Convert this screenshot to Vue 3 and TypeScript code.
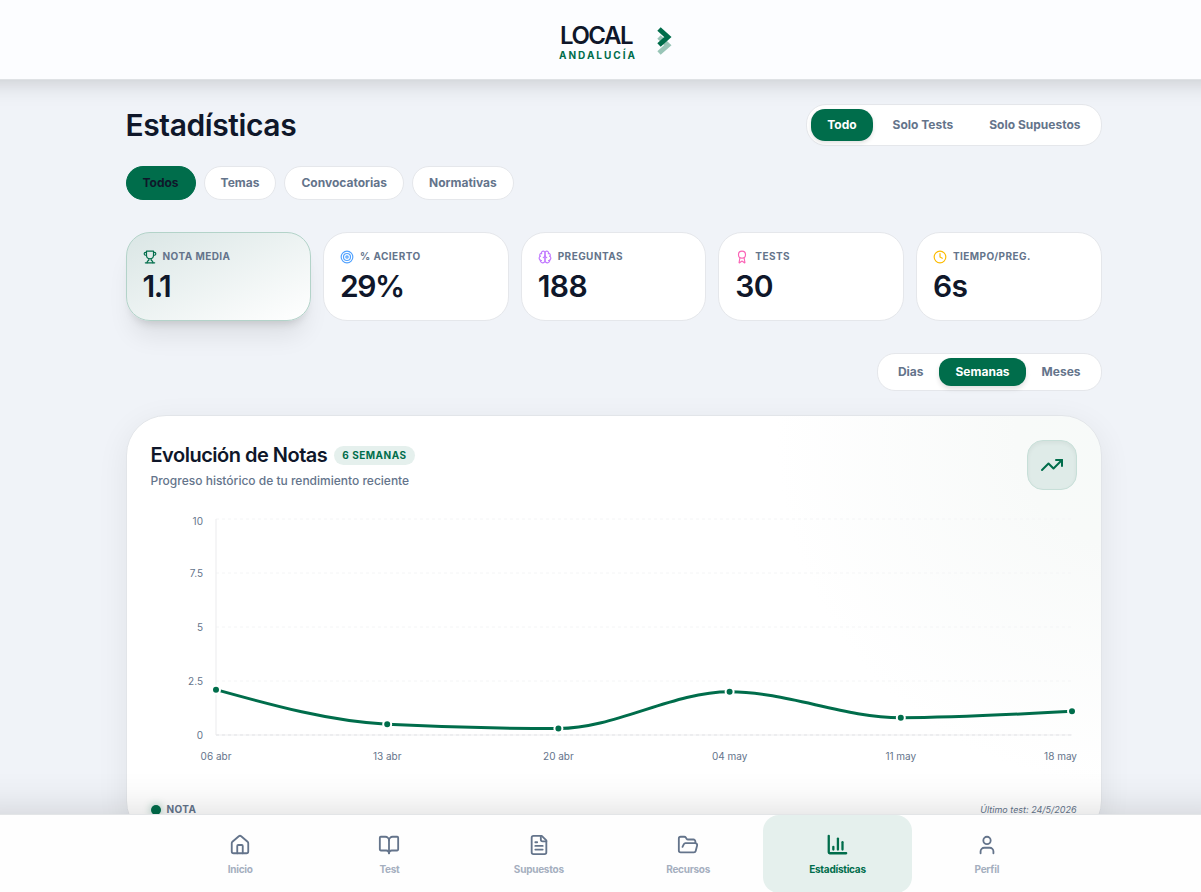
<script setup lang="ts">
interface Stat {
  label: string
  value: string
  color: string
  fit: string
  icon: string
}

const scopes = ['Todo', 'Solo Tests', 'Solo Supuestos']
const filters = ['Todos', 'Temas', 'Convocatorias', 'Normativas']
const ranges = ['Dias', 'Semanas', 'Meses']

const stats: Stat[] = [
  {
    label: 'Nota media',
    value: '1.1',
    color: '#006d4b',
    fit: 'tight',
    icon: '<path d="M6 9H4.5a2.5 2.5 0 0 1 0-5H6"/><path d="M18 9h1.5a2.5 2.5 0 0 0 0-5H18"/><path d="M4 22h16"/><path d="M10 14.66V17c0 .55-.47.98-.97 1.21C7.85 18.75 7 20.24 7 22"/><path d="M14 14.66V17c0 .55.47.98.97 1.21C16.15 18.75 17 20.24 17 22"/><path d="M18 2H6v7a6 6 0 0 0 12 0V2Z"/>',
  },
  {
    label: '% Acierto',
    value: '29%',
    color: '#51a2ff',
    fit: 'tight',
    icon: '<circle cx="12" cy="12" r="10"/><circle cx="12" cy="12" r="6"/><circle cx="12" cy="12" r="2"/>',
  },
  {
    label: 'Preguntas',
    value: '188',
    color: '#c27aff',
    fit: 'snug',
    icon: '<path d="M12 5a3 3 0 1 0-5.997.125 4 4 0 0 0-2.526 5.77 4 4 0 0 0 .556 6.588A4 4 0 1 0 12 18Z"/><path d="M12 5a3 3 0 1 1 5.997.125 4 4 0 0 1 2.526 5.77 4 4 0 0 1-.556 6.588A4 4 0 1 1 12 18Z"/><path d="M15 13a4.5 4.5 0 0 1-3-4 4.5 4.5 0 0 1-3 4"/><path d="M17.599 6.5a3 3 0 0 0 .399-1.375"/><path d="M6.003 5.125A3 3 0 0 0 6.401 6.5"/><path d="M3.477 10.896a4 4 0 0 1 .585-.396"/><path d="M19.938 10.5a4 4 0 0 1 .585.396"/><path d="M6 18a4 4 0 0 1-1.967-.516"/><path d="M19.967 17.484A4 4 0 0 1 18 18"/>',
  },
  {
    label: 'Tests',
    value: '30',
    color: '#fb64b6',
    fit: 'snug',
    icon: '<path d="m15.477 12.89 1.515 8.526a.5.5 0 0 1-.81.47l-3.58-2.687a1 1 0 0 0-1.197 0l-3.586 2.686a.5.5 0 0 1-.81-.469l1.514-8.526"/><circle cx="12" cy="8" r="6"/>',
  },
  {
    label: 'Tiempo/preg.',
    value: '6s',
    color: '#fcbb00',
    fit: 'snug',
    icon: '<circle cx="12" cy="12" r="10"/><path d="M12 6v6l4 2"/>',
  },
]

const navItems = [
  {
    label: 'Inicio',
    icon: '<path d="M15 21v-8a1 1 0 0 0-1-1h-4a1 1 0 0 0-1 1v8"/><path d="M3 10a2 2 0 0 1 .709-1.528l7-5.999a2 2 0 0 1 2.582 0l7 5.999A2 2 0 0 1 21 10v9a2 2 0 0 1-2 2H5a2 2 0 0 1-2-2z"/>',
  },
  {
    label: 'Test',
    icon: '<path d="M12 7v14"/><path d="M3 18a1 1 0 0 1-1-1V4a1 1 0 0 1 1-1h5a4 4 0 0 1 4 4 4 4 0 0 1 4-4h5a1 1 0 0 1 1 1v13a1 1 0 0 1-1 1h-6a3 3 0 0 0-3 3 3 3 0 0 0-3-3z"/>',
  },
  {
    label: 'Supuestos',
    icon: '<path d="M15 2H6a2 2 0 0 0-2 2v16a2 2 0 0 0 2 2h12a2 2 0 0 0 2-2V7Z"/><path d="M14 2v4a2 2 0 0 0 2 2h4"/><path d="M10 9H8"/><path d="M16 13H8"/><path d="M16 17H8"/>',
  },
  {
    label: 'Recursos',
    icon: '<path d="m6 14 1.5-2.9A2 2 0 0 1 9.24 10H20a2 2 0 0 1 1.94 2.5l-1.54 6a2 2 0 0 1-1.95 1.5H4a2 2 0 0 1-2-2V5a2 2 0 0 1 2-2h3.9a2 2 0 0 1 1.69.9l.81 1.2a2 2 0 0 0 1.67.9H18a2 2 0 0 1 2 2v2"/>',
  },
  {
    label: 'Estadísticas',
    icon: '<path d="M3 2v18a1 1 0 0 0 1 1h18"/><path d="M8 17v-3"/><path d="M13 17V5"/><path d="M18 17V9"/>',
  },
  {
    label: 'Perfil',
    icon: '<path d="M19 21v-2a4 4 0 0 0-4-4H9a4 4 0 0 0-4 4v2"/><circle cx="12" cy="7" r="4"/>',
  },
]

const plot = { left: 65, right: 921, top: 10, bottom: 226 }
const ticks = [10, 7.5, 5, 2.5, 0]
const series = [
  { label: '06 abr', value: 2.1 },
  { label: '13 abr', value: 0.5 },
  { label: '20 abr', value: 0.3 },
  { label: '04 may', value: 2.0 },
  { label: '11 may', value: 0.8 },
  { label: '18 may', value: 1.1 },
]

const yOf = (v: number): number => plot.bottom - (v / 10) * (plot.bottom - plot.top)
const step = (plot.right - plot.left) / (series.length - 1)
const points = series.map((s, i) => ({ ...s, x: plot.left + i * step, y: yOf(s.value) }))

// Monotone cubic interpolation along x
function monotonePath(): string {
  const n = points.length
  const slopes = points.slice(1).map((p, i) => (p.y - points[i].y) / step)
  const t: number[] = new Array(n).fill(0)
  for (let i = 1; i < n - 1; i++) {
    const a = slopes[i - 1]
    const b = slopes[i]
    t[i] = (Math.sign(a) + Math.sign(b)) * Math.min(Math.abs(a), Math.abs(b), 0.25 * Math.abs(a + b))
  }
  t[0] = (3 * slopes[0] - t[1]) / 2
  t[n - 1] = (3 * slopes[n - 2] - t[n - 2]) / 2
  let d = `M${points[0].x},${points[0].y}`
  for (let i = 1; i < n; i++) {
    const p = points[i - 1]
    const q = points[i]
    d += `C${p.x + step / 3},${p.y + (t[i - 1] * step) / 3},${q.x - step / 3},${q.y - (t[i] * step) / 3},${q.x},${q.y}`
  }
  return d
}
const linePath = monotonePath()
</script>

<template>
  <div class="page">
    <header class="topbar">
      <div class="brand">
        <div class="brand-text">
          <span class="brand-name">LOCAL</span>
          <span class="brand-region">ANDALUCÍA</span>
        </div>
        <svg class="brand-mark" width="16" height="28" viewBox="0 0 16 28" fill="none" stroke-width="5">
          <path d="M2 10l8.8 8.2L2 26" stroke="#99c5b7" />
          <path d="M2 2l8.8 8L2 18" stroke="#006d4b" />
        </svg>
      </div>
    </header>

    <main class="content">
      <div class="title-row">
        <h1>Estadísticas</h1>
        <div class="segment scope">
          <button v-for="(s, i) in scopes" :key="s" :class="{ active: i === 0 }">{{ s }}</button>
        </div>
      </div>

      <div class="filters">
        <button v-for="(f, i) in filters" :key="f" :class="{ active: i === 0 }">{{ f }}</button>
      </div>

      <section class="stats">
        <article v-for="(s, i) in stats" :key="s.label" class="stat" :class="{ featured: i === 0 }">
          <div class="stat-head">
            <svg width="14" height="14" viewBox="0 0 24 24" fill="none" :stroke="s.color" stroke-width="2" stroke-linecap="round" stroke-linejoin="round" v-html="s.icon" />
            <span>{{ s.label }}</span>
          </div>
          <div class="stat-value" :class="s.fit">{{ s.value }}</div>
        </article>
      </section>

      <div class="range-row">
        <div class="segment range">
          <button v-for="(r, i) in ranges" :key="r" :class="{ active: i === 1 }">{{ r }}</button>
        </div>
      </div>

      <section class="panel">
        <div class="panel-head">
          <div class="panel-intro">
            <div class="panel-title">
              <h2>Evolución de Notas</h2>
              <span class="badge">6 semanas</span>
            </div>
            <p>Progreso histórico de tu rendimiento reciente</p>
          </div>
          <div class="trend">
            <svg width="24" height="24" viewBox="0 0 24 24" fill="none" stroke="#006d4b" stroke-width="2" stroke-linecap="round" stroke-linejoin="round">
              <path d="M22 7 13.5 15.5 8.5 10.5 2 17" />
              <path d="M16 7h6v6" />
            </svg>
          </div>
        </div>

        <svg class="chart" width="926" height="280" viewBox="0 0 926 280">
          <line v-for="t in ticks" :key="'g' + t" :x1="plot.left" :x2="plot.right" :y1="yOf(t)" :y2="yOf(t)" stroke="#f4f5f6" stroke-dasharray="3 3" />
          <line :x1="plot.left" :x2="plot.left" :y1="plot.top" :y2="plot.bottom" stroke="#ebebed" />
          <line :x1="plot.left" :x2="plot.right" :y1="plot.bottom" :y2="plot.bottom" stroke="#efeff1" />
          <line :x1="plot.left" :x2="plot.right" :y1="plot.bottom" :y2="plot.bottom" stroke="#e6e7e9" stroke-dasharray="3 3" />
          <text v-for="t in ticks" :key="'y' + t" x="52" :y="yOf(t) + (t === 10 ? 6 : 4)" text-anchor="end">{{ t }}</text>
          <text v-for="(p, i) in points" :key="p.label" :x="i === 5 ? 926 : p.x" y="251" :text-anchor="i === 5 ? 'end' : 'middle'">{{ p.label }}</text>
          <path :d="linePath" fill="none" stroke="#006d4b" stroke-width="3" />
          <circle v-for="p in points" :key="'d' + p.label" :cx="p.x" :cy="p.y" r="4" fill="#006d4b" stroke="#fff" stroke-width="2" />
        </svg>

        <div class="panel-foot">
          <span class="legend"><i />Nota</span>
          <em>Último test: 24/5/2026</em>
        </div>
      </section>
    </main>

    <nav class="bottombar">
      <a v-for="(n, i) in navItems" :key="n.label" :class="{ active: i === 4 }">
        <svg width="22" height="22" viewBox="0 0 24 24" fill="none" stroke="currentColor" :stroke-width="i === 4 ? 2.5 : 2" stroke-linecap="round" stroke-linejoin="round" v-html="n.icon" />
        <span>{{ n.label }}</span>
      </a>
    </nav>
  </div>
</template>

<style>
body {
  background: #f0f4f8;
  overflow: hidden;
}
</style>

<style scoped>
.page {
  box-sizing: border-box;
  height: 892px;
  overflow: hidden;
  display: flex;
  flex-direction: column;
  background: #f0f3f8;
  color: #0f172a;
  font-family: Inter, 'Liberation Sans', sans-serif;
}
button {
  border: 0;
  background: none;
  padding: 0;
  font: 700 12px/16px Inter, 'Liberation Sans', sans-serif;
  color: #64748b;
}
.topbar {
  flex: none;
  position: relative;
  z-index: 2;
  box-sizing: border-box;
  height: 80px;
  padding: 0 0 0 31px;
  display: flex;
  align-items: center;
  justify-content: center;
  background: #fcfdff;
  border-bottom: 1px solid #dfe2e5;
  box-shadow: 0 -30px 24px 30px rgba(0, 0, 0, 0.21);
}
.brand {
  display: flex;
  align-items: center;
  gap: 20px;
}
.brand-text {
  display: flex;
  flex-direction: column;
  padding-top: 4px;
}
.brand-name {
  padding-left: 1px;
  font-size: 24px;
  line-height: 24px;
  font-weight: 600;
  letter-spacing: -1.5px;
}
.brand-region {
  margin-top: 2px;
  font-size: 10px;
  line-height: 10px;
  font-weight: 700;
  letter-spacing: 2px;
  color: #006d4b;
}
.brand-mark {
  margin-top: 2px;
}
.content {
  flex: 1;
  min-height: 0;
  box-sizing: border-box;
  width: 976px;
  margin-left: 125.5px;
  padding-top: 24px;
}
.title-row {
  display: flex;
  justify-content: space-between;
  align-items: center;
  height: 42px;
}
h1 {
  margin: 0;
  font-size: 30px;
  line-height: 36px;
  font-weight: 600;
  letter-spacing: -0.4px;
}
.segment {
  box-sizing: border-box;
  display: flex;
  padding: 4px;
  background: #fff;
  border: 1px solid #e5e7eb;
}
.segment button.active {
  background: #006d4b;
  color: #fff;
  box-shadow: 0 2px 4px rgba(0, 0, 0, 0.12);
}
.scope {
  height: 42px;
  border-radius: 20px;
}
.scope button {
  padding: 0 16px;
  border-radius: 14px;
}
.scope button + button {
  margin-left: 4px;
}
.filters {
  display: flex;
  gap: 8px;
  margin-top: 20px;
}
.filters button {
  height: 34px;
  padding: 0 16px;
  background: #fff;
  border: 1px solid #e5e7eb;
  border-radius: 17px;
}
.filters button.active {
  background: #006d4b;
  border-color: #006d4b;
  color: #0f172a;
}
.stats {
  display: grid;
  grid-template-columns: repeat(5, 1fr);
  gap: 12px;
  margin-top: 32px;
}
.stat {
  box-sizing: border-box;
  height: 89px;
  padding: 16px;
  background: #fff;
  border: 1px solid #e5e7eb;
  border-radius: 24px;
}
.stat.featured {
  background: linear-gradient(to bottom right, #dae6e5, #fff);
  border-color: #b3d3c9;
  box-shadow:
    0 20px 25px -5px rgba(0, 0, 0, 0.08),
    0 8px 10px -6px rgba(0, 0, 0, 0.14);
}
.stat-head {
  display: flex;
  align-items: center;
  gap: 6px;
  height: 15px;
}
.stat-head span {
  font-size: 10px;
  line-height: 15px;
  font-weight: 700;
  letter-spacing: 0.45px;
  text-transform: uppercase;
  color: #64748b;
}
.stat-value {
  margin-top: 4px;
  font-size: 30px;
  line-height: 36px;
  font-weight: 600;
}
.stat-value.tight {
  letter-spacing: -1.5px;
}
.stat-value.snug {
  letter-spacing: -0.6px;
}
.range-row {
  display: flex;
  justify-content: flex-end;
  margin-top: 32px;
}
.range {
  height: 38px;
  border-radius: 18px;
}
.range button {
  padding: 0 16px;
  border-radius: 12px;
}
.range button.active {
  box-shadow: 0 3px 5px rgba(0, 0, 0, 0.12);
}
.panel {
  box-sizing: border-box;
  height: 426px;
  margin-top: 24px;
  padding: 24px;
  border: 1px solid #e2e5e9;
  border-radius: 40px;
  background: radial-gradient(circle at 1000px 20px, #f7faf9 0, #f8faf9 110px, #fff 350px);
  box-shadow: 0 8px 32px rgba(0, 0, 0, 0.07);
}
.panel-head {
  display: flex;
  justify-content: space-between;
}
.panel-intro {
  padding-top: 1px;
}
.panel-title {
  display: flex;
  align-items: center;
  gap: 7px;
  height: 28px;
}
h2 {
  margin: 0;
  font-size: 20px;
  line-height: 28px;
  font-weight: 600;
  letter-spacing: -0.5px;
}
.badge {
  padding: 2px 8px;
  border-radius: 10px;
  background: #e5f0ed;
  color: #006d4b;
  font-size: 10px;
  line-height: 15px;
  font-weight: 700;
  letter-spacing: 0.5px;
  text-transform: uppercase;
}
.panel-head p {
  margin: 4px 0 0;
  font-size: 12px;
  line-height: 16px;
  font-weight: 500;
  color: #64748b;
}
.trend {
  box-sizing: border-box;
  width: 50px;
  height: 50px;
  display: flex;
  align-items: center;
  justify-content: center;
  border: 1px solid #c7dfd8;
  border-radius: 16px;
  background: #dfebe8;
  box-shadow: inset 0 2px 4px rgba(0, 0, 0, 0.05);
}
.chart {
  display: block;
  margin: 19px 0 0 0.5px;
  overflow: visible;
}
.chart text {
  font-size: 10px;
  fill: #64748b;
}
.panel-foot {
  display: flex;
  justify-content: space-between;
  align-items: center;
  margin-top: 13px;
  height: 15px;
  font-size: 10px;
  line-height: 15px;
  color: #64748b;
}
.panel-foot em {
  font-size: 9px;
}
.legend {
  display: flex;
  align-items: center;
  gap: 6px;
  font-weight: 700;
  letter-spacing: 0.4px;
  text-transform: uppercase;
}
.legend i {
  width: 10px;
  height: 10px;
  border-radius: 50%;
  background: #006d4b;
  box-shadow: 0 0 8px rgba(0, 109, 75, 0.4);
}
.bottombar {
  flex: none;
  position: relative;
  z-index: 2;
  box-sizing: border-box;
  height: 78px;
  padding-left: 165.5px;
  display: flex;
  background: #fefefe;
  border-top: 1px solid #e3e5e7;
  box-shadow: 0 40px 40px 40px rgba(0, 0, 0, 0.16);
}
.bottombar a {
  box-sizing: border-box;
  width: 149.33px;
  height: 78px;
  padding-top: 19px;
  display: flex;
  flex-direction: column;
  align-items: center;
  gap: 6px;
  border-radius: 16px;
  color: #64748b;
}
.bottombar span {
  font-size: 10px;
  line-height: 15px;
  font-weight: 700;
  letter-spacing: -0.25px;
  color: #a5afbf;
}
.bottombar a.active {
  background: #e5f0ed;
  color: #006d4b;
}
.bottombar a.active span {
  color: #006d4b;
}
</style>
